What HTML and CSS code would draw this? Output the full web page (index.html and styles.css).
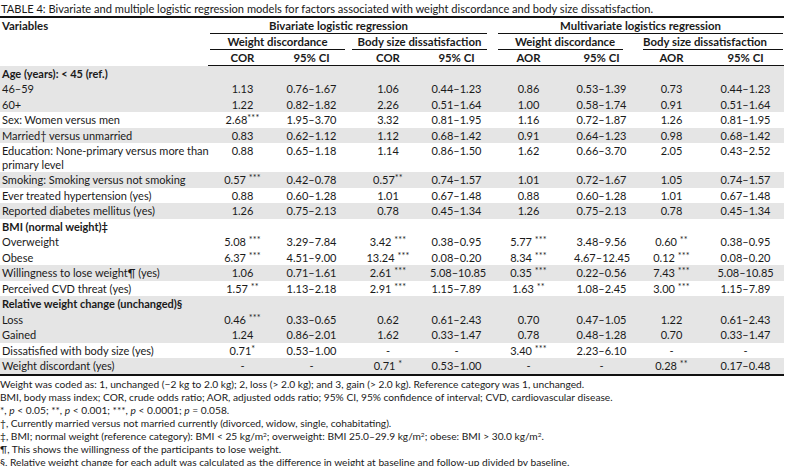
FILE: index.html
```html
<!DOCTYPE html>
<html lang="en">
<head>
<meta charset="utf-8">
<title>Table 4</title>
<link rel="stylesheet" href="styles.css">
</head>
<body>
<div class="page">
  <div class="caption">TABLE 4: Bivariate and multiple logistic regression models for factors associated with weight discordance and body size dissatisfaction.</div>
  <table class="tbl">
    <colgroup>
      <col class="c0"><col class="c1"><col class="c2"><col class="c3"><col class="c4"><col class="c5"><col class="c6"><col class="c7"><col class="c8">
    </colgroup>
    <thead>
      <tr>
        <th class="var" rowspan="3">Variables</th>
        <th colspan="4"><div class="grp g-biv"><span class="lbl l-biv">Bivariate logistic regression</span></div></th>
        <th colspan="4"><div class="grp g-mul"><span class="lbl">Multivariate logistics regression</span></div></th>
      </tr>
      <tr>
        <th colspan="2"><div class="grp g-bw"><span class="lbl">Weight discordance</span></div></th>
        <th colspan="2"><div class="grp g-bb"><span class="lbl">Body size dissatisfaction</span></div></th>
        <th colspan="2"><div class="grp g-mw"><span class="lbl l-mw">Weight discordance</span></div></th>
        <th colspan="2"><div class="grp g-mb"><span class="lbl l-mb">Body size dissatisfaction</span></div></th>
      </tr>
      <tr class="sub">
        <th>COR</th><th>95% CI</th><th>COR</th><th>95% CI</th><th>AOR</th><th>95% CI</th><th>AOR</th><th class="last">95% CI</th>
      </tr>
    </thead>
    <tbody>
      <tr class="g"><td class="v b">Age (years): &lt; 45 (ref.)</td><td></td><td></td><td></td><td></td><td></td><td></td><td></td><td class="last"></td></tr>
      <tr class="g"><td class="v">46–59</td><td>1.13</td><td>0.76–1.67</td><td>1.06</td><td>0.44–1.23</td><td>0.86</td><td>0.53–1.39</td><td>0.73</td><td class="last">0.44–1.23</td></tr>
      <tr class="g"><td class="v">60+</td><td>1.22</td><td>0.82–1.82</td><td>2.26</td><td>0.51–1.64</td><td>1.00</td><td>0.58–1.74</td><td>0.91</td><td class="last">0.51–1.64</td></tr>
      <tr><td class="v">Sex: Women versus men</td><td>2.68<sup>***</sup></td><td>1.95–3.70</td><td>3.32</td><td>0.81–1.95</td><td>1.16</td><td>0.72–1.87</td><td>1.26</td><td class="last">0.81–1.95</td></tr>
      <tr class="g"><td class="v">Married† versus unmarried</td><td>0.83</td><td>0.62–1.12</td><td>1.12</td><td>0.68–1.42</td><td>0.91</td><td>0.64–1.23</td><td>0.98</td><td class="last">0.68–1.42</td></tr>
      <tr><td class="v">Education: None-primary versus more than<br>primary level</td><td>0.88</td><td>0.65–1.18</td><td>1.14</td><td>0.86–1.50</td><td>1.62</td><td>0.66–3.70</td><td>2.05</td><td class="last">0.43–2.52</td></tr>
      <tr class="g"><td class="v">Smoking: Smoking versus not smoking</td><td>0.57 <sup>***</sup></td><td>0.42–0.78</td><td>0.57<sup>**</sup></td><td>0.74–1.57</td><td>1.01</td><td>0.72–1.67</td><td>1.05</td><td class="last">0.74–1.57</td></tr>
      <tr><td class="v">Ever treated hypertension (yes)</td><td>0.88</td><td>0.60–1.28</td><td>1.01</td><td>0.67–1.48</td><td>0.88</td><td>0.60–1.28</td><td>1.01</td><td class="last">0.67–1.48</td></tr>
      <tr class="g"><td class="v">Reported diabetes mellitus (yes)</td><td>1.26</td><td>0.75–2.13</td><td>0.78</td><td>0.45–1.34</td><td>1.26</td><td>0.75–2.13</td><td>0.78</td><td class="last">0.45–1.34</td></tr>
      <tr><td class="v b">BMI (normal weight)‡</td><td></td><td></td><td></td><td></td><td></td><td></td><td></td><td class="last"></td></tr>
      <tr><td class="v">Overweight</td><td>5.08 <sup>***</sup></td><td>3.29–7.84</td><td>3.42 <sup>***</sup></td><td>0.38–0.95</td><td>5.77 <sup>***</sup></td><td>3.48–9.56</td><td>0.60 <sup>**</sup></td><td class="last">0.38–0.95</td></tr>
      <tr><td class="v">Obese</td><td>6.37 <sup>***</sup></td><td>4.51–9.00</td><td>13.24 <sup>***</sup></td><td>0.08–0.20</td><td>8.34 <sup>***</sup></td><td>4.67–12.45</td><td>0.12 <sup>***</sup></td><td class="last">0.08–0.20</td></tr>
      <tr class="g"><td class="v">Willingness to lose weight¶ (yes)</td><td>1.06</td><td>0.71–1.61</td><td>2.61 <sup>***</sup></td><td>5.08–10.85</td><td>0.35 <sup>***</sup></td><td>0.22–0.56</td><td>7.43 <sup>***</sup></td><td class="last">5.08–10.85</td></tr>
      <tr><td class="v">Perceived CVD threat (yes)</td><td>1.57 <sup>**</sup></td><td>1.13–2.18</td><td>2.91 <sup>***</sup></td><td>1.15–7.89</td><td>1.63 <sup>**</sup></td><td>1.08–2.45</td><td>3.00 <sup>***</sup></td><td class="last">1.15–7.89</td></tr>
      <tr class="g"><td class="v b">Relative weight change (unchanged)§</td><td></td><td></td><td></td><td></td><td></td><td></td><td></td><td class="last"></td></tr>
      <tr class="g"><td class="v">Loss</td><td>0.46 <sup>***</sup></td><td>0.33–0.65</td><td>0.62</td><td>0.61–2.43</td><td>0.70</td><td>0.47–1.05</td><td>1.22</td><td class="last">0.61–2.43</td></tr>
      <tr class="g"><td class="v">Gained</td><td>1.24</td><td>0.86–2.01</td><td>1.62</td><td>0.33–1.47</td><td>0.78</td><td>0.48–1.28</td><td>0.70</td><td class="last">0.33–1.47</td></tr>
      <tr><td class="v">Dissatisfied with body size (yes)</td><td>0.71<sup>*</sup></td><td>0.53–1.00</td><td>-</td><td>-</td><td>3.40 <sup>***</sup></td><td>2.23–6.10</td><td>-</td><td class="last">-</td></tr>
      <tr class="g end"><td class="v">Weight discordant (yes)</td><td>-</td><td>-</td><td>0.71 <sup>*</sup></td><td>0.53–1.00</td><td>-</td><td>-</td><td>0.28 <sup>**</sup></td><td class="last">0.17–0.48</td></tr>
    </tbody>
  </table>
  <div class="notes">
    <p>Weight was coded as: 1, unchanged (−2 kg to 2.0 kg); 2, loss (&gt; 2.0 kg); and 3, gain (&gt; 2.0 kg). Reference category was 1, unchanged.</p>
    <p>BMI, body mass index; COR, crude odds ratio; AOR, adjusted odds ratio; 95% CI, 95% confidence of interval; CVD, cardiovascular disease.</p>
    <p>*, <i>p</i> &lt; 0.05; **, <i>p</i> &lt; 0.001; ***, <i>p</i> &lt; 0.0001; <i>p</i> = 0.058.</p>
    <p>†, Currently married versus not married currently (divorced, widow, single, cohabitating).</p>
    <p>‡, BMI; normal weight (reference category): BMI &lt; 25 kg/m<sup>2</sup>; overweight: BMI 25.0–29.9 kg/m<sup>2</sup>; obese: BMI &gt; 30.0 kg/m<sup>2</sup>.</p>
    <p>¶, This shows the willingness of the participants to lose weight.</p>
    <p>§, Relative weight change for each adult was calculated as the difference in weight at baseline and follow-up divided by baseline.</p>
  </div>
</div>
</body>
</html>
```

FILE: styles.css
```css
html, body {
  margin: 0;
  padding: 0;
  background: #ffffff;
}

body {
  font-family: "Lato", "Liberation Sans", sans-serif;
  color: #1a1a1a;
  font-size: 11px;
}

.page {
  width: 788px;
}

.caption {
  height: 16px;
  line-height: 17px;
  padding-left: 1px;
  font-size: 11.1px;
  white-space: nowrap;
}

.tbl {
  width: 784px;
  table-layout: fixed;
  border-collapse: collapse;
  border-top: 2px solid #111;
}

.c0 { width: 208px; }
.c1 { width: 69px; }
.c2 { width: 69px; }
.c3 { width: 84px; }
.c4 { width: 53px; }
.c5 { width: 91px; }
.c6 { width: 55px; }
.c7 { width: 85px; }
.c8 { width: 70px; }

.tbl th {
  padding: 0;
  font-weight: 700;
  font-size: 11.4px;
  text-align: center;
  vertical-align: top;
  white-space: nowrap;
}

.tbl th.var {
  text-align: left;
  padding-left: 2px;
  line-height: 15px;
}

.grp {
  height: 15px;
  line-height: 15px;
  border-bottom: 1px solid #111;
  text-align: center;
}

.g-biv { margin: 0 -4px 0 2px; }
.g-mul { margin: 0 1px 0 15px; }
.g-bw { margin: 0 1px 0 2px; }
.g-bb { margin: 0 -4px 0 6px; }
.g-mw { margin: 0 6px 0 15px; }
.g-mb { margin: 0 1px 0 14px; }

.l-biv { padding-right: 20px; }
.l-mw { padding-left: 9px; }
.l-mb { padding-right: 16px; }

.lbl { display: inline-block; }

.sub th {
  height: 15px;
  line-height: 15px;
  border-bottom: 1px solid #111;
}

.tbl td {
  padding: 1px 0;
  line-height: 13.5px;
  text-align: center;
  vertical-align: top;
  white-space: nowrap;
}

.tbl td.v {
  text-align: left;
  padding-left: 2px;
  padding-right: 0;
  overflow: visible;
}

.tbl .last {
  padding-right: 7px;
}

.tbl td.b {
  font-weight: 700;
}

.tbl tr.g td {
  background: #e5e5e5;
}

.tbl tr.end td {
  border-bottom: 2px solid #111;
}

.tbl sup {
  font-size: 9px;
  line-height: 0;
  vertical-align: 3px;
  letter-spacing: 0.2px;
}

.notes {
  padding-top: 2px;
  font-size: 10.2px;
}

.notes p {
  margin: 0;
  line-height: 13px;
  white-space: nowrap;
}

.notes sup {
  font-size: 6.5px;
  line-height: 0;
  vertical-align: 3px;
}
```
